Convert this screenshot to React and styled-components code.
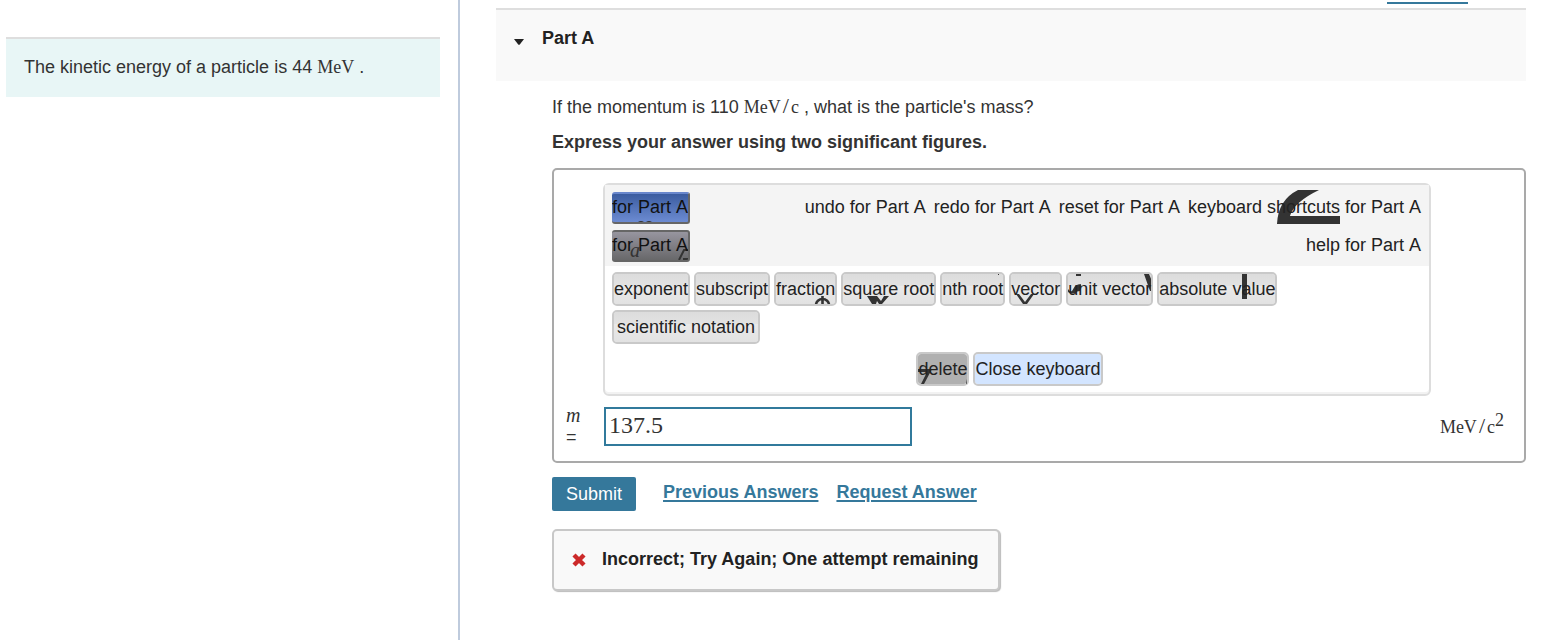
import React from "react";
import styled, { createGlobalStyle, css } from "styled-components";

const sans = `"Liberation Sans", Arial, Helvetica, sans-serif`;
const serif = `"Liberation Serif", "Times New Roman", serif`;

const GlobalStyle = createGlobalStyle`
  *, *::before, *::after { box-sizing: border-box; }
  body {
    margin: 0;
    background: #fff;
    color: #333;
    font: 18px/20px ${sans};
  }
  button, input { font: inherit; color: inherit; }
  p, h2 { margin: 0; }
`;

const Page = styled.div`
  display: grid;
  grid-template-columns: 460px minmax(0, 1fr);
  min-height: 100vh;
`;

const Sidebar = styled.aside`
  padding: 37px 18px 0 6px;
  border-right: 2px solid #bfcbdd;
`;

const Intro = styled.p`
  padding: 18px 18px 20px;
  border-top: 2px solid #dedede;
  background: #e8f6f6;
`;

const Main = styled.main`
  padding: 0 30px 40px 36px;
`;

const TopLinks = styled.nav`
  display: flex;
  justify-content: flex-end;
  align-items: flex-end;
  height: 8px;
  padding: 0 58px 4px 0;
  overflow: hidden;
`;

const ConstantsLink = styled.a`
  color: #35789b;
  line-height: 16px;
  text-decoration: none;
  border-bottom: 2px solid #35789b;
`;

const PartHeader = styled.header`
  display: flex;
  align-items: center;
  gap: 18px;
  padding: 18px 18px 33px;
  border-top: 2px solid #dedede;
  background: #f9f9f9;
`;

const Caret = styled.svg`
  width: 10px;
  height: 6px;
  margin-top: 7px;
`;

const PartTitle = styled.h2`
  color: #222;
  font-size: 18px;
  line-height: 20px;
`;

const Body = styled.section`
  padding: 16px 0 0 56px;
`;

const Instruction = styled.p`
  margin-top: 15px;
  font-weight: bold;
`;

const MathText = styled.span`
  font-family: ${serif};
  white-space: nowrap;
`;

const Slash = styled.span`
  padding: 0 2px;
  font-size: 22px;
  line-height: 0;
`;

const Power = styled.sup`
  font-size: 18px;
  line-height: 0;
`;

const AnswerBox = styled.form`
  margin-top: 16px;
  padding: 13px 20px 15px 12px;
  border: 2px solid #a9a9a9;
  border-radius: 5px;
`;

const Keyboard = styled.div`
  max-width: 828px;
  margin-left: 37px;
  border: 2px solid #ddd;
  border-radius: 6px;
  box-shadow: inset 0 -2px #f2f2f2;
`;

const Toolbar = styled.div`
  display: flex;
  justify-content: space-between;
  padding: 7px 8px 4px 7px;
  background: #f4f4f4;
  font-kerning: none;
`;

const ModeList = styled.div`
  display: flex;
  flex-direction: column;
  gap: 6px;
`;

const ModeButton = styled.button`
  position: relative;
  isolation: isolate;
  width: 78px;
  height: 32px;
  padding: 0 0 2px;
  overflow: hidden;
  white-space: nowrap;
  color: #111;
  border: solid #666;
  border-width: 2px 2px 2px 0;
  border-radius: 3px;
  ${(p) =>
    p.$active
      ? css`
          border-top-color: #6987cc;
          background: linear-gradient(#3b5c9f, #6c8bd2);
        `
      : css`
          background: linear-gradient(#97959f, #68686a);
        `}
`;

const ActionList = styled.div`
  display: flex;
  flex-wrap: wrap;
  justify-content: flex-end;
  gap: 6px 8px;
  max-width: 640px;
`;

const ActionButton = styled.button`
  position: relative;
  isolation: isolate;
  height: 32px;
  padding: 0 0 2px;
  border: 0;
  background: none;
  color: #222;
`;

const Keys = styled.div`
  display: flex;
  flex-wrap: wrap;
  justify-content: ${(p) => (p.$centered ? "center" : "flex-start")};
  gap: 4px;
  padding: ${(p) => (p.$centered ? "8px 22px 8px 7px" : "6px 22px 0 7px")};
`;

const keyTones = {
  plain: "linear-gradient(#dcdcdc, #e2e2e2 12px, #e9e9e9 12px, #e2e2e2)",
  dark: "#b0b0b0",
  blue: "#d3e5ff",
};

const Key = styled.button`
  position: relative;
  isolation: isolate;
  height: 34px;
  padding: 0 ${(p) => (p.$wide ? 3 : 0)}px;
  border: 2px solid #c9c9c9;
  border-radius: 5px;
  background: ${(p) => keyTones[p.$tone || "plain"]};
  background-clip: padding-box;
  color: #222;
  white-space: nowrap;
`;

const Mark = styled.svg`
  position: absolute;
  z-index: -1;
  top: 0;
  left: 0;
  width: 100%;
  height: 100%;
  overflow: ${(p) => (p.$spill ? "visible" : "hidden")};
  fill: #333;
  stroke: none;
`;

const AnswerRow = styled.div`
  display: flex;
  align-items: flex-start;
  margin-top: 11px;
`;

const AnswerLabel = styled.label`
  width: 38px;
  margin: -3px 0 -2px;
  line-height: 22px;
`;

const Variable = styled.i`
  display: block;
  font-family: ${serif};
  font-size: 20px;
`;

const AnswerInput = styled.input`
  width: 308px;
  height: 39px;
  padding: 0 4px 2px 3px;
  border: 2px solid #317a9c;
  border-radius: 0;
  outline: 0;
  background: #fff;
  font-family: ${serif};
  font-size: 24px;
`;

const Units = styled.span`
  margin: 10px 0 0 auto;
`;

const Actions = styled.div`
  display: flex;
  align-items: flex-start;
  gap: 18px;
  margin-top: 14px;
`;

const SubmitButton = styled.button`
  height: 34px;
  margin-right: 9px;
  padding: 0 14px;
  border: 0;
  border-radius: 2px;
  background: #35789b;
  color: #fff;
`;

const ActionLink = styled.a`
  margin-top: 5px;
  color: #35789b;
  font-weight: bold;
  text-decoration: underline 2px;
  text-underline-offset: 2px;
`;

const Feedback = styled.div`
  display: flex;
  align-items: center;
  gap: 16px;
  width: fit-content;
  margin-top: 18px;
  padding: 18px 20px 20px 18px;
  border: 2px solid #c8c8c8;
  border-radius: 5px;
  background: #f9f9f9;
  box-shadow: 1px 1px 1px #bbb;
  color: #222;
  font-weight: bold;
`;

const Cross = styled.svg`
  width: 14px;
  height: 14px;
  margin-top: 2px;
`;

const keys = [
  { label: "exponent" },
  { label: "subscript" },
  {
    label: "fraction",
    mark: (
      <path
        d="M40 31a6.5 6 0 0 1 13 0M46.5 22v9"
        fill="none"
        stroke="#333"
        strokeWidth="2.6"
      />
    ),
  },
  {
    label: "square root",
    mark: <path d="M24 22h10l4 5 3-5h5l-7 8h-3l-2-3-1 3h-4z" />,
  },
  { label: "nth root", mark: <path d="M56 0h1v1h-1z" /> },
  {
    label: "vector",
    mark: <path d="M5 20h3l6 8 6-8h3l-7 10h-4z" />,
  },
  {
    label: "unit vector",
    mark: (
      <path d="M8 0h5v2H8zM0 15q2 3 4 2l3-5q3-2 6-2l-1 7q-3 0-5 2-4 2-7-1zM76 0h5l3 7v10h-2z" />
    ),
  },
  { label: "absolute value", mark: <path d="M83 0h5v25h-5z" /> },
  { label: "scientific notation", wide: true },
];

function MeVPerC() {
  return (
    <>
      MeV<Slash>/</Slash>c
    </>
  );
}

export default function App() {
  return (
    <>
      <GlobalStyle />
      <Page>
        <Sidebar>
          <Intro>
            The kinetic energy of a particle is 44 <MathText>MeV</MathText> .
          </Intro>
        </Sidebar>
        <Main>
          <TopLinks>
            <ConstantsLink href="#constants">Constants</ConstantsLink>
          </TopLinks>
          <PartHeader>
            <Caret viewBox="0 0 10 6" aria-hidden="true">
              <path d="M0 0h10L5.8 5.4q-.8 .8-1.6 0z" fill="#222" />
            </Caret>
            <PartTitle>Part A</PartTitle>
          </PartHeader>
          <Body>
            <p>
              If the momentum is 110{" "}
              <MathText>
                <MeVPerC />
              </MathText>{" "}
              , what is the particle's mass?
            </p>
            <Instruction>
              Express your answer using two significant figures.
            </Instruction>
            <AnswerBox onSubmit={(e) => e.preventDefault()} id="answer-form">
              <Keyboard>
                <Toolbar>
                  <ModeList>
                    <ModeButton type="button" $active>
                      <Mark aria-hidden="true">
                        <path d="M26 28q3-2 6 0zM34 28q3-2 6 0z" />
                      </Mark>
                      for Part A
                    </ModeButton>
                    <ModeButton type="button">
                      <Mark aria-hidden="true">
                        <text
                          x="18"
                          y="25"
                          fontFamily="Liberation Serif"
                          fontStyle="italic"
                          fontSize="20"
                        >
                          a
                        </text>
                        <path
                          d="M67 28l5-10h5M71 27h5"
                          fill="none"
                          stroke="#333"
                          strokeWidth="2"
                        />
                      </Mark>
                      for Part A
                    </ModeButton>
                  </ModeList>
                  <ActionList>
                    <ActionButton type="button">undo for Part A</ActionButton>
                    <ActionButton type="button">redo for Part A</ActionButton>
                    <ActionButton type="button">reset for Part A</ActionButton>
                    <ActionButton type="button">
                      <Mark aria-hidden="true" $spill>
                        <path d="M110-2h21Q106 10 102 24h50v8H89Q90 8 110-2z" />
                      </Mark>
                      keyboard shortcuts for Part A
                    </ActionButton>
                    <ActionButton type="button">help for Part A</ActionButton>
                  </ActionList>
                </Toolbar>
                <Keys>
                  {keys.map(({ label, mark, wide }) => (
                    <Key type="button" key={label} $wide={wide}>
                      {mark && <Mark aria-hidden="true">{mark}</Mark>}
                      {label}
                    </Key>
                  ))}
                </Keys>
                <Keys $centered>
                  <Key type="button" $tone="dark">
                    <Mark aria-hidden="true">
                      <path d="M0 15h14L6 30H3l6-12H0zM50 19v10l-2 1 1-5z" />
                    </Mark>
                    delete
                  </Key>
                  <Key type="button" $tone="blue">
                    Close keyboard
                  </Key>
                </Keys>
              </Keyboard>
              <AnswerRow>
                <AnswerLabel htmlFor="mass">
                  <Variable>m</Variable>=
                </AnswerLabel>
                <AnswerInput id="mass" type="text" defaultValue="137.5" />
                <Units>
                  <MathText>
                    <MeVPerC />
                    <Power>2</Power>
                  </MathText>
                </Units>
              </AnswerRow>
            </AnswerBox>
            <Actions>
              <SubmitButton type="submit" form="answer-form">
                Submit
              </SubmitButton>
              <ActionLink href="#previous">Previous Answers</ActionLink>
              <ActionLink href="#request">Request Answer</ActionLink>
            </Actions>
            <Feedback role="status">
              <Cross viewBox="0 0 14 14" aria-hidden="true">
                <path
                  d="M2 2l10 10M12 2L2 12"
                  stroke="#cc2a2a"
                  strokeWidth="4.4"
                />
              </Cross>
              Incorrect; Try Again; One attempt remaining
            </Feedback>
          </Body>
        </Main>
      </Page>
    </>
  );
}
